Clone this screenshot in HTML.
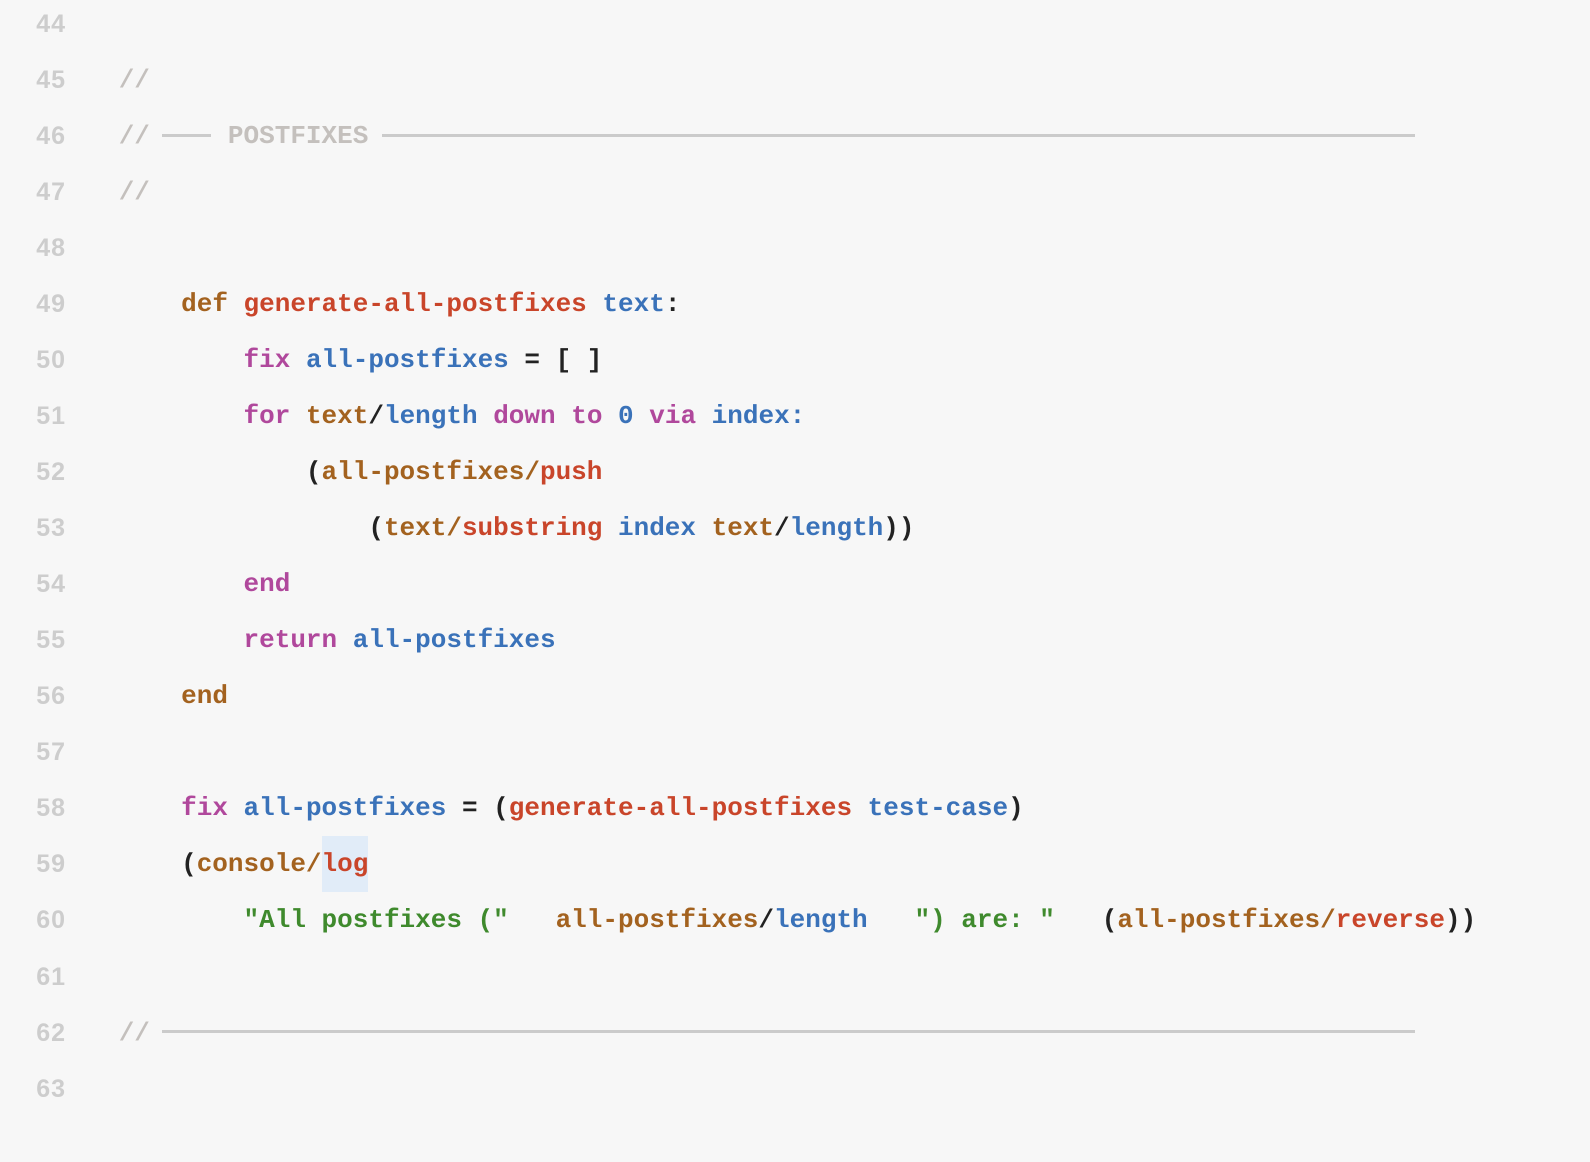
<!DOCTYPE html>
<html><head><meta charset="utf-8"><style>
html,body{margin:0;padding:0;background:#f7f7f7;width:1590px;height:1162px;overflow:hidden}
.ln,.c{top:calc(-4px + var(--n) * 56.03px)}
.ln{position:absolute;left:0;width:66px;text-align:right;font:bold 25px "Liberation Sans",sans-serif;color:#cdcdcd;line-height:56px;letter-spacing:1px}
.c{position:absolute;left:118.7px;font:bold 26px "Liberation Mono",monospace;white-space:pre;line-height:56px;color:#222}
.cm{color:#c4c0bd}.b{color:#a3621f}.r{color:#c9452a}.u{color:#3a72b9}.p{color:#b0489c}.g{color:#3f8a2d}
.dash{position:absolute;height:3px;background:#cbcbcb}
.hl{background:#e1ecf8;display:inline-block;line-height:56px}
</style></head><body>
<div class="ln" style="--n:0">44</div>
<div class="ln" style="--n:1">45</div>
<div class="ln" style="--n:2">46</div>
<div class="ln" style="--n:3">47</div>
<div class="ln" style="--n:4">48</div>
<div class="ln" style="--n:5">49</div>
<div class="ln" style="--n:6">50</div>
<div class="ln" style="--n:7">51</div>
<div class="ln" style="--n:8">52</div>
<div class="ln" style="--n:9">53</div>
<div class="ln" style="--n:10">54</div>
<div class="ln" style="--n:11">55</div>
<div class="ln" style="--n:12">56</div>
<div class="ln" style="--n:13">57</div>
<div class="ln" style="--n:14">58</div>
<div class="ln" style="--n:15">59</div>
<div class="ln" style="--n:16">60</div>
<div class="ln" style="--n:17">61</div>
<div class="ln" style="--n:18">62</div>
<div class="ln" style="--n:19">63</div>

<div class="c cm" style="--n:1">//</div>
<div class="c cm" style="--n:2">//     POSTFIXES</div>
<div class="dash" style="left:162px;width:49px;top:134px"></div>
<div class="dash" style="left:382px;width:1033px;top:134px"></div>
<div class="c cm" style="--n:3">//</div>
<div class="c" style="--n:5">    <span class="b">def</span> <span class="r">generate-all-postfixes</span> <span class="u">text</span>:</div>
<div class="c" style="--n:6">        <span class="p">fix</span> <span class="u">all-postfixes</span> = [ ]</div>
<div class="c" style="--n:7">        <span class="p">for</span> <span class="b">text</span>/<span class="u">length</span> <span class="p">down to</span> <span class="u">0</span> <span class="p">via</span> <span class="u">index:</span></div>
<div class="c" style="--n:8">            (<span class="b">all-postfixes/</span><span class="r">push</span></div>
<div class="c" style="--n:9">                (<span class="b">text/</span><span class="r">substring</span> <span class="u">index</span> <span class="b">text</span>/<span class="u">length</span>))</div>
<div class="c" style="--n:10">        <span class="p">end</span></div>
<div class="c" style="--n:11">        <span class="p">return</span> <span class="u">all-postfixes</span></div>
<div class="c" style="--n:12">    <span class="b">end</span></div>
<div class="c" style="--n:14">    <span class="p">fix</span> <span class="u">all-postfixes</span> = (<span class="r">generate-all-postfixes</span> <span class="u">test-case</span>)</div>
<div class="c" style="--n:15">    (<span class="b">console/</span><span class="r hl">log</span></div>
<div class="c" style="--n:16">        <span class="g">"All postfixes ("</span>   <span class="b">all-postfixes</span>/<span class="u">length</span>   <span class="g">") are: "</span>   (<span class="b">all-postfixes/</span><span class="r">reverse</span>))</div>
<div class="c cm" style="--n:18">//</div>
<div class="dash" style="left:162px;width:1253px;top:1030px"></div>
</body></html>
